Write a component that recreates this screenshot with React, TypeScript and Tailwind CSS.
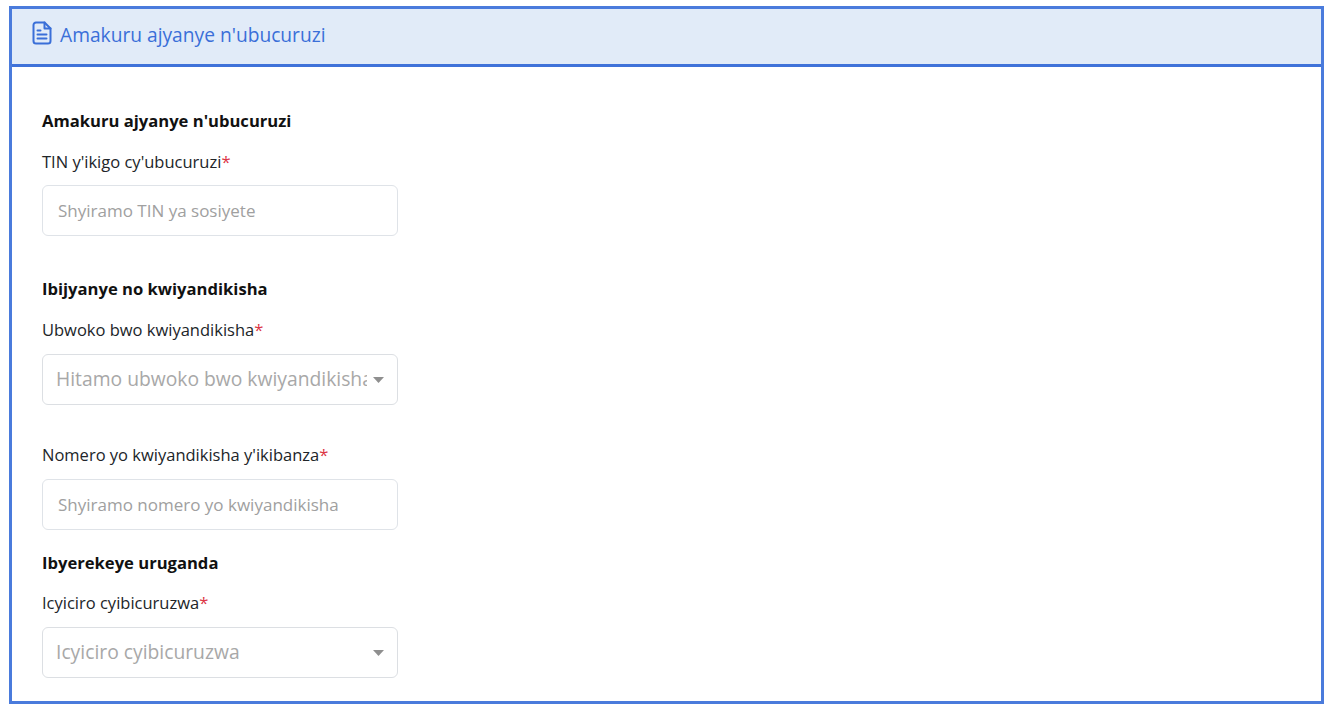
function SectionTitle({ children, className = '' }: { children: string; className?: string }) {
  return <h3 className={`text-[16.6px] leading-[24px] font-bold text-[#111111] ${className}`}>{children}</h3>;
}

function FieldLabel({ children, className = '' }: { children: string; className?: string }) {
  return (
    <label className={`block text-[16.5px] leading-[24px] text-[#212529] ${className}`}>
      {children}
      <span className="text-[#dc3545]">*</span>
    </label>
  );
}

function TextBox({ placeholder }: { placeholder: string }) {
  return (
    <div className="h-[51px] w-[356px] rounded-[6px] border border-[#dfe3e8] bg-white pl-[15px] text-[17px] leading-[49px] text-[#a0a0a0]">
      {placeholder}
    </div>
  );
}

function SelectBox({ placeholder }: { placeholder: string }) {
  return (
    <div className="flex h-[51px] w-[356px] items-center rounded-[6px] border border-[#dcdfe3] bg-white pl-[13px] pr-[13px]">
      <span className="flex-1 overflow-hidden whitespace-nowrap text-[19.3px] text-[#a8a8a8]">{placeholder}</span>
      <svg width="11" height="6" viewBox="0 0 11 6" className="ml-[6px] shrink-0">
        <path d="M0 0h11L5.5 6z" fill="#8f8f8f" />
      </svg>
    </div>
  );
}

function FileIcon() {
  return (
    <svg width="20" height="24" viewBox="0 0 20 24" fill="none" stroke="#3a6fd8" strokeWidth="2" strokeLinecap="round" strokeLinejoin="round" className="mb-[4px] shrink-0">
      <path d="M12.5 1.5H4a2.5 2.5 0 0 0-2.5 2.5v16A2.5 2.5 0 0 0 4 22.5h12a2.5 2.5 0 0 0 2.5-2.5V7.5z" />
      <path d="M12.5 1.5v6h6" />
      <path d="M5.5 9.5h3M5.5 13.5h9M5.5 17.5h9" />
    </svg>
  );
}

export default function App() {
  return (
    <div className="min-h-[712px] bg-white pl-[9px] pt-[6px] font-['Open_Sans','Noto_Sans',sans-serif]">
      <div className="h-[698px] w-[1315px] overflow-hidden border-[3px] border-[#4a7bdc] bg-white">
        <div className="flex h-[58px] items-center gap-[8px] border-b-[3px] border-[#3f72d9] bg-[#e1ebf8] pl-[20px] pb-[3px]">
          <FileIcon />
          <span className="text-[19.2px] text-[#3a6fd8]">Amakuru ajyanye n'ubucuruzi</span>
        </div>
        <div className="pl-[30px] pt-[42px]">
          <SectionTitle>Amakuru ajyanye n'ubucuruzi</SectionTitle>
          <FieldLabel className="mt-[17px] mb-[11px]">TIN y'ikigo cy'ubucuruzi</FieldLabel>
          <TextBox placeholder="Shyiramo TIN ya sosiyete" />

          <SectionTitle className="mt-[41px]">Ibijyanye no kwiyandikisha</SectionTitle>
          <FieldLabel className="mt-[17px] mb-[12px]">Ubwoko bwo kwiyandikisha</FieldLabel>
          <SelectBox placeholder="Hitamo ubwoko bwo kwiyandikisha" />

          <FieldLabel className="mt-[38px] mb-[12px]">Nomero yo kwiyandikisha y'ikibanza</FieldLabel>
          <TextBox placeholder="Shyiramo nomero yo kwiyandikisha" />

          <SectionTitle className="mt-[21px]">Ibyerekeye uruganda</SectionTitle>
          <FieldLabel className="mt-[16px] mb-[12px]">Icyiciro cyibicuruzwa</FieldLabel>
          <SelectBox placeholder="Icyiciro cyibicuruzwa" />
        </div>
      </div>
    </div>
  );
}
